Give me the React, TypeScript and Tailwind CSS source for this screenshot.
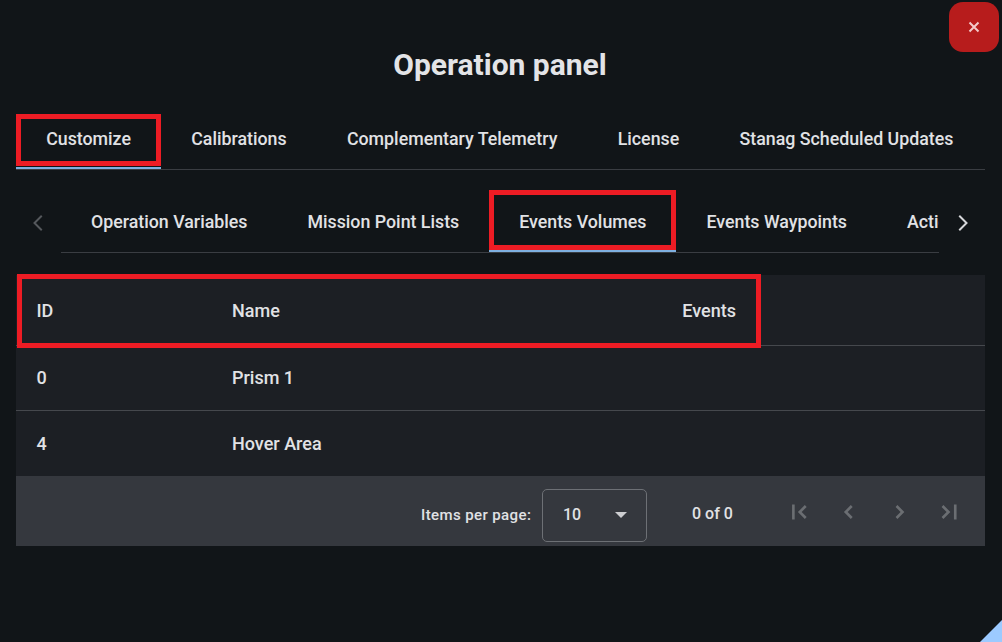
const font = "[font-family:Roboto,sans-serif]";

const mainTabs = [
  { label: "Customize", active: true },
  { label: "Calibrations" },
  { label: "Complementary Telemetry" },
  { label: "License" },
  { label: "Stanag Scheduled Updates" },
];

const subTabs = [
  { label: "Operation Variables" },
  { label: "Mission Point Lists" },
  { label: "Events Volumes", active: true },
  { label: "Events Waypoints" },
  { label: "Actions" },
];

const rows = [
  { id: "0", name: "Prism 1" },
  { id: "4", name: "Hover Area" },
];

const Icon = ({ d, width = 2.1 }: { d: string; width?: number }) => (
  <svg viewBox="0 0 24 24" className="w-[30px] h-[30px]" fill="none" stroke="currentColor" strokeWidth={width}>
    <path d={d} />
  </svg>
);

const pagerIcons = [
  "M17.4 7.2L12.6 12l4.8 4.8M7.5 6v12",
  "M14.2 7.2L9.4 12l4.8 4.8",
  "M10 7.2L14.8 12 10 16.8",
  "M6.8 7.2L11.6 12l-4.8 4.8M17 6v12",
];

export default function App() {
  return (
    <div className={`relative w-[1002px] h-[642px] overflow-hidden bg-[#111518] text-[#e1e2e5] font-medium ${font}`}>
      <button className="absolute top-[2px] left-[949px] w-[50px] h-[50px] rounded-[14px] bg-[#b71c1c] flex items-center justify-center pr-[1px] pb-[1px] text-[#f3c9c9]">
        <svg viewBox="0 0 12 12" className="w-[12px] h-[12px]" stroke="currentColor" strokeWidth="2" fill="none">
          <path d="M1.5 1.5l9 9M10.5 1.5l-9 9" />
        </svg>
      </button>

      <div className="flex flex-col pl-4 pr-[17px]">
        <h1 className="pt-[45px] h-[113px] text-center text-[30px] leading-[40px] font-bold text-[#e3e4e7] pr-[1px]">
          Operation panel
        </h1>

        <div className="flex h-[57px] border-b border-[#3a3d42]">
          {mainTabs.map((tab) => (
            <div key={tab.label} className="relative flex items-center px-[30.15px] pb-[4px] text-[17.8px] whitespace-nowrap">
              {tab.label}
              {tab.active && (
                <>
                  <div className="absolute left-0 right-0 bottom-0 h-[2px] bg-[#7fb0e0]" />
                  <div className="absolute left-0 right-0 top-[1px] h-[52px] border-[5px] border-[#ed1c24]" />
                </>
              )}
            </div>
          ))}
        </div>

        <div className="flex items-center h-[83px]">
          <div className="w-[45px] flex justify-start pl-[7px] pt-[22px] text-[#55585c]">
            <Icon d="M15 6.2L9.2 12l5.8 5.8" width={1.6} />
          </div>
          <div className="flex w-[878px] h-[83px] overflow-hidden border-b border-[#3a3d42]">
            {subTabs.map((tab) => (
              <div key={tab.label} className="relative shrink-0 flex items-center px-[30px] pt-[22px] text-[17.8px] whitespace-nowrap">
                {tab.label}
                {tab.active && (
                  <>
                    <div className="absolute left-0 right-0 bottom-0 h-[2px] bg-[#7fb0e0]" />
                    <div className="absolute left-0 right-0 top-[20px] h-[60px] border-[5px] border-[#ed1c24]" />
                  </>
                )}
              </div>
            ))}
          </div>
          <div className="pl-[9px] pt-[22px] text-[#d6d7da]">
            <Icon d="M9 6.2L14.8 12 9 17.8" width={1.6} />
          </div>
        </div>

        <div className="relative mt-[22px] bg-[#1c1f24] text-[18px]">
          <div className="grid grid-cols-[216px_250px_254px_1fr] items-center h-[71px] border-b border-[#45484d]">
            <div className="pl-[20.5px]">ID</div>
            <div>Name</div>
            <div className="text-right">Events</div>
          </div>
          {rows.map((row, i) => (
            <div
              key={row.id}
              className={`grid grid-cols-[216px_250px_254px_1fr] items-center h-[65px] ${i === 0 ? "border-b border-[#45484d] pb-[1px]" : ""}`}
            >
              <div className="pl-[20.5px]">{row.id}</div>
              <div>{row.name}</div>
            </div>
          ))}
          <div className="absolute top-[-1px] left-[1px] w-[744px] h-[74px] border-[5px] border-[#ed1c24]" />

          <div className="flex items-center h-[70px] bg-[#35383e]">
            <div className="ml-[405px] w-[121px] mt-[8px] text-[15px] tracking-[0.4px] whitespace-nowrap">Items per page:</div>
            <div className="flex items-center w-[105px] h-[53px] mt-[8px] rounded-[5px] border border-[#6d7075] pl-[20px] pr-[19px] text-base justify-between">
              <span>10</span>
              <span className="w-0 h-0 border-x-[6.5px] border-x-transparent border-t-[6px] border-t-[#cdced1]" />
            </div>
            <div className="ml-[45px] w-[41px] mt-[6px] text-base whitespace-nowrap">0 of 0</div>
            <div className="ml-[41px] mt-[2px] flex text-[#6b6e72]">
              {pagerIcons.map((d) => (
                <div key={d} className="w-[50px] flex justify-center">
                  <Icon d={d} />
                </div>
              ))}
            </div>
          </div>
        </div>
      </div>

      <svg viewBox="0 0 22 22" className="absolute right-0 bottom-0 w-[22px] h-[22px]">
        <path d="M22 0V22H0z" fill="#9ccaff" />
      </svg>
    </div>
  );
}
